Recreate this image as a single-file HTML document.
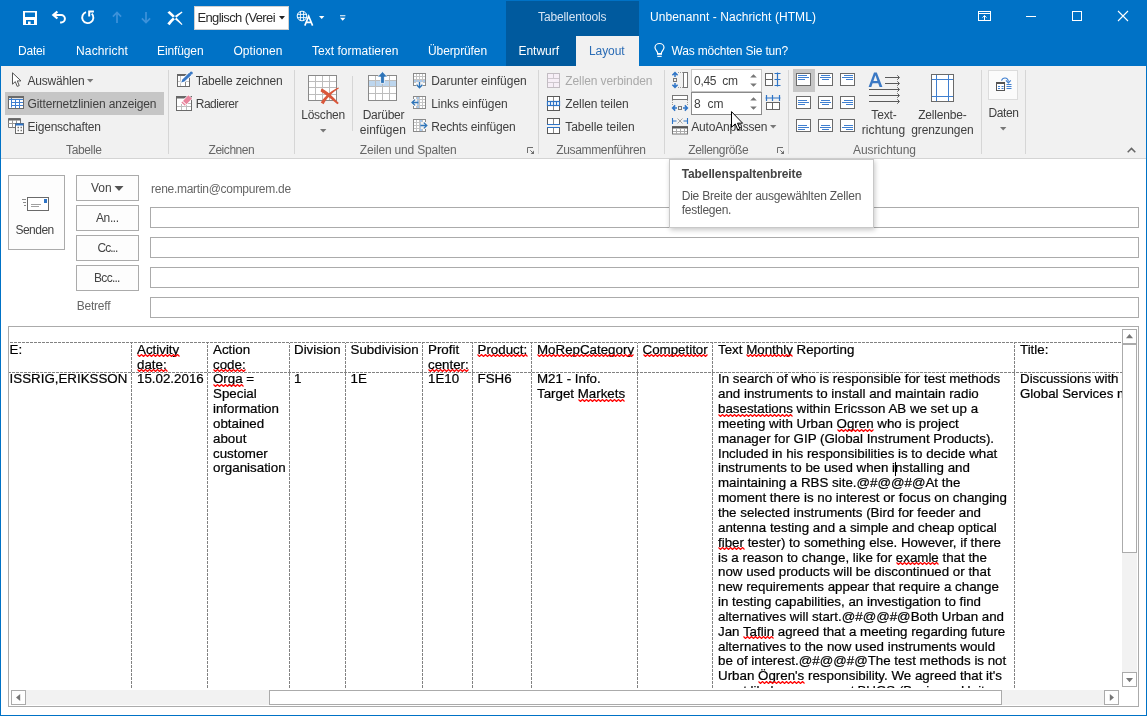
<!DOCTYPE html>
<html>
<head>
<meta charset="utf-8">
<title>Unbenannt - Nachricht (HTML)</title>
<style>
html,body{margin:0;padding:0;}
body{width:1147px;height:716px;overflow:hidden;background:#fff;font-family:"Liberation Sans",sans-serif;font-size:12px;color:#444;position:relative;}
.abs,.a{position:absolute;}
svg{position:absolute;overflow:visible;}
#win{position:absolute;left:0;top:0;width:1147px;height:716px;overflow:hidden;background:#fff;}
#blue{position:absolute;left:0;top:0;width:1147px;height:66px;background:#0072c6;}
#ctx{position:absolute;left:506px;top:1px;width:133px;height:65px;background:#005a9e;}
#tabsel{position:absolute;left:576px;top:36px;width:63px;height:30px;background:#f1f1f1;}
.t{position:absolute;white-space:pre;line-height:14px;opacity:0.999;}
#ribbon{position:absolute;left:1px;top:66px;width:1145px;height:92px;background:#f1f1f1;border-bottom:1px solid #d4d4d4;}
.sep{position:absolute;top:70px;width:1px;height:84px;background:#d6d6d6;}
.hl{position:absolute;background:#c6c6c6;}
.btn{position:absolute;border:1px solid #ababab;background:#fdfdfd;box-sizing:border-box;}
.fld{position:absolute;left:150px;width:989px;height:21px;border:1px solid #ababab;box-sizing:border-box;background:#fff;}
#lb,#rb,#bb{position:absolute;background:#0072c6;}
#lb{left:0;top:0;width:1px;height:716px;}
#rb{left:1146px;top:0;width:1px;height:716px;}
#bb{left:0;top:715px;width:1147px;height:1px;}
#ed{position:absolute;left:8px;top:326px;width:1131px;height:381px;border:1px solid #ababab;box-sizing:border-box;background:#fff;overflow:hidden;}
#doc{position:absolute;left:0;top:0;width:1113px;height:361px;overflow:hidden;font-size:13.333px;line-height:14.84px;color:#000;}
.c{position:absolute;white-space:nowrap;filter:grayscale(1);-webkit-text-stroke:0.22px #000;}
.vd{position:absolute;top:16px;width:1px;height:345px;background:repeating-linear-gradient(to bottom,#828282 0,#828282 1px,transparent 1px,transparent 2px,#828282 2px,#828282 4px);}
.hd{position:absolute;left:0;width:1113px;height:1px;background:repeating-linear-gradient(to right,transparent 0,transparent 1px,#828282 1px,#828282 4px);}
.sq{background-repeat:repeat-x;background-position:0 100%;}
.sbb{background:#fff;border:1px solid #ababab;box-sizing:border-box;}

</style>
</head>
<body>
<div id="win">
<div id="blue"></div>
<div id="ctx"></div>
<div id="tabsel"></div>
<div class="a" style="left:194px;top:6px;width:95px;height:24px;background:#fff;border:1px solid #d0d0d0;box-sizing:border-box;"></div>
<!-- QAT icons -->
<svg style="left:23px;top:11px" width="14" height="14"><path fill="#fff" fill-rule="evenodd" d="M0 0H14V14H0Z M2 1.5V6H12V1.5Z M3 9V13H5V10.6H7.6V13H11V9Z"/></svg>
<svg style="left:51px;top:10px" width="16" height="15" fill="none" stroke="#fff" stroke-width="2"><path d="M6.4 1.5L2.4 5L6.4 8.5" stroke-linejoin="miter" stroke-width="2.3"/><path d="M3 5H10.2A3.7 3.7 0 0 1 10.2 12.4H9.1"/></svg>
<svg style="left:80px;top:10px" width="16" height="15" fill="none" stroke="#fff" stroke-width="1.9"><path d="M6 2.2A5.6 5.6 0 1 0 11.8 3.6"/><path d="M13.9 1.6H9.2V6.6" stroke-linejoin="miter" stroke-width="2"/></svg>
<svg style="left:112px;top:11px" width="10" height="13" fill="none" stroke="#3d92da" stroke-width="1.7"><path d="M5 12V1.6M0.9 5.6L5 1.5L9.1 5.6"/></svg>
<svg style="left:141px;top:11px" width="10" height="13" fill="none" stroke="#3d92da" stroke-width="1.7"><path d="M5 1V11.4M0.9 7.4L5 11.5L9.1 7.4"/></svg>
<svg style="left:167px;top:11px" width="16" height="14"><path fill="#fff" d="M0.4 1.6L2.6 0C6.4 3 11.2 8.4 15.5 13.3L14.7 14C10 10.2 4.4 5.2 0.4 1.6Z M0.3 12.4L2.6 14.2C5.6 10 10.6 5.2 15.5 1.5L14.8 0.5C9.4 3.4 3.9 7.9 0.3 12.4Z"/></svg>
<svg style="left:279px;top:16px" width="6" height="4"><path d="M0 0H6L3 3.5Z" fill="#222"/></svg>
<!-- language icon -->
<svg style="left:296px;top:10px" width="19" height="17" fill="none" stroke="#fff"><circle cx="6" cy="6" r="4.8" stroke-width="1"/><path d="M1.2 4.4H10.8M1.2 7.6H10.8M4.4 1.3V10.7M7.6 1.3V10.7" stroke-width="0.9"/><path d="M8.8 15.6L12.7 6.2L16.6 15.6M10.2 12.4H15.2" stroke-width="1.6" stroke-linejoin="miter"/></svg>
<svg style="left:319px;top:16px" width="6" height="4"><path d="M0 0H5.4L2.7 3Z" fill="#fff"/></svg>
<svg style="left:340px;top:15px" width="6" height="7"><path d="M0 0.2H5.4V1.2H0Z M0 2.7H5.4L2.7 5.7Z" fill="#fff"/></svg>
<!-- lightbulb -->
<svg style="left:654px;top:43px" width="11" height="15" fill="none"><path d="M3.6 10C3.6 8 1 6.9 1 4.5A4.5 4 0 0 1 10 4.5C10 6.9 7.4 8 7.4 10" stroke="#fff" stroke-width="1.2"/><rect x="3" y="10" width="5" height="1.8" fill="#fff"/><rect x="3.3" y="12.8" width="4.4" height="1.1" fill="#fff"/></svg>
<!-- window controls -->
<svg style="left:978px;top:11px" width="13" height="10" fill="none" stroke="#fff" stroke-width="1"><rect x="0.5" y="0.5" width="12" height="9"/><path d="M0.5 2.5H12.5"/><path d="M6.5 9V4.6M4.5 6.6L6.5 4.6L8.5 6.6"/></svg>
<svg style="left:1026px;top:16px" width="10" height="1"><rect width="10" height="1" fill="#fff"/></svg>
<svg style="left:1072px;top:11px" width="10" height="10" fill="none" stroke="#fff" stroke-width="1"><rect x="0.5" y="0.5" width="9" height="9"/></svg>
<svg style="left:1118px;top:11px" width="10" height="10" fill="none" stroke="#fff" stroke-width="1.1"><path d="M0 0L10 10M10 0L0 10"/></svg>

<div id="ribbon"></div>
<div class="sep" style="left:168px"></div>
<div class="sep" style="left:294px"></div>
<div class="sep" style="left:352px;top:76px;height:55px"></div>
<div class="sep" style="left:538px"></div>
<div class="sep" style="left:664px"></div>
<div class="sep" style="left:788px"></div>
<div class="sep" style="left:981px"></div>
<div class="sep" style="left:1025px"></div>
<div class="hl" style="left:5px;top:92px;width:159px;height:23px"></div>
<div class="hl" style="left:793px;top:69px;width:22px;height:23px"></div>
<!-- === Tabelle group icons === -->
<svg style="left:11px;top:72px" width="11" height="16"><path d="M1.5 0.8V12.2L4.3 9.6L6.2 14.4L8.2 13.6L6.3 8.9L10 8.9Z" fill="#fff" stroke="#555" stroke-width="1" stroke-linejoin="miter"/></svg>
<svg style="left:8px;top:96px" width="16" height="13"><rect x="0.5" y="0.5" width="15" height="12" fill="#fff" stroke="#6a6a6a"/><path d="M3.5 1.5V11.5M1 3.5H15M4 6.5H15M4 9.5H15M7.5 3V12M11.5 3V12" stroke="#3f7fd0" stroke-width="1" fill="none"/><path d="M1 1.5H15" stroke="#6a6a6a" stroke-width="1.4"/></svg>
<svg style="left:8px;top:118px" width="16" height="16"><path d="M0.5 0.5H12.5V9.5H0.5Z" fill="#fff" stroke="#777"/><path d="M0.5 1.5H12.5" stroke="#666" stroke-width="2"/><path d="M0.5 5.5H8M4.5 2V9.5M8.5 2V5" stroke="#999" fill="none"/><rect x="7.5" y="5.5" width="8" height="10" fill="#fff" stroke="#6a6a6a"/><path d="M7.5 6.5H15.5" stroke="#2e74c6" stroke-width="2"/><path d="M9.5 9.5H11M12.5 9.5H14M9.5 12.5H11M12.5 12.5H14" stroke="#777" stroke-width="1.6"/></svg>
<svg style="left:87px;top:79px" width="7" height="4"><path d="M0 0H6.4L3.2 3.4Z" fill="#777"/></svg>
<!-- === Zeichnen group icons === -->
<svg style="left:177px;top:71px" width="16" height="16"><rect x="0.5" y="3.5" width="12" height="12" fill="#fff" stroke="#6a6a6a"/><path d="M0 4H13" stroke="#666" stroke-width="2"/><path d="M3.5 5V15M1 10.5H12" stroke="#c4c4c4" fill="none"/><path d="M8.5 11V15" stroke="#8a8a8a"/><path d="M4.2 11.4L5.4 8.2L12.4 1.6L14.6 3.8L7.6 10.4Z" fill="#fff" stroke="#fff" stroke-width="1.6"/><path d="M4.2 11.4L5.4 8.4L12.2 1.8L14.4 4L7.4 10.4Z" fill="#3a78c4"/><circle cx="14.2" cy="2" r="1.6" fill="#3a78c4"/></svg>
<svg style="left:176px;top:95px" width="17" height="17"><rect x="0.5" y="1.5" width="15" height="14" fill="#fff" stroke="#6a6a6a"/><path d="M0 2.5H16" stroke="#666" stroke-width="2"/><path d="M1 11.5H15M5.5 9V15M10.5 9V15M10 8.5H15" stroke="#bdbdbd" fill="none"/><path d="M4.6 7.4L12.3 -0.6L16.8 3.6L9 11.6Z" fill="#fff"/><path d="M7 5.9L12.3 0.2L16 3.6L10.5 9.2Z" fill="#e8849c"/><path d="M5.4 7.4L6.3 6.5L9.8 9.8L8.9 10.8Z" fill="#e8849c"/></svg>
<!-- === Zeilen und Spalten === -->
<!-- Löschen: table 308..337 x 75..101 -->
<svg style="left:308px;top:75px" width="32" height="30"><rect x="0.5" y="0.5" width="28" height="25" fill="#fff" stroke="#8a8a8a"/><path d="M7.5 1V25M14.5 1V25M21.5 1V25M1 6.5H28M1 12.5H28M1 19.5H28" stroke="#bdbdbd" fill="none"/><path d="M13.4 13.4C18 14.6 25 21.6 30.8 28L29.4 29.2C24 24.4 17.6 19.4 12.6 16.4Z M31 13.2C25.4 16.6 19.2 22.4 15.6 29.2L12.8 27.6C16.8 21 24.4 15 30.4 12.6Z" fill="#d9573b"/></svg>
<svg style="left:320px;top:129px" width="7" height="4"><path d="M0 0H6.4L3.2 3.4Z" fill="#777"/></svg>
<!-- Darüber: table 368..397 -->
<svg style="left:368px;top:71px" width="30" height="31"><rect x="0.5" y="4.5" width="28" height="25" fill="#fff" stroke="#8a8a8a"/><rect x="1" y="10" width="27" height="5" fill="#bdd6ee"/><path d="M7.5 5V29M14.5 5V29M21.5 5V29M1 9.5H28M1 15.5H28M1 22.5H28" stroke="#bdbdbd" fill="none"/><path d="M10 4H19V15H10Z" fill="#f1f1f1" opacity="0"/><path d="M14.5 0.6L19.6 6H16.4V12.4H12.6V6H9.4Z" fill="#2e74b8" stroke="#fff" stroke-width="0.8"/></svg>
<!-- Darunter einfügen small -->
<svg style="left:413px;top:73px" width="13" height="16"><rect x="0.5" y="0.5" width="12" height="12" fill="#fff" stroke="#8a8a8a"/><rect x="1" y="7" width="11" height="3" fill="#a9c8ea"/><path d="M3.5 1V12M6.5 1V12M9.5 1V12M1 3.5H12M1 6.5H12M1 9.5H12" stroke="#c4c4c4" fill="none"/><rect x="3" y="9" width="7" height="5" fill="#f1f1f1"/><path d="M6.5 9V14.6M3.6 11.8L6.5 14.8L9.4 11.8" stroke="#2e74b8" stroke-width="1.3" fill="none"/></svg>
<!-- Links einfügen small -->
<svg style="left:411px;top:96px" width="16" height="13"><rect x="2.5" y="0.5" width="12" height="12" fill="#fff" stroke="#8a8a8a"/><rect x="6" y="1" width="3" height="11" fill="#a9c8ea"/><path d="M5.5 1V12M8.5 1V12M11.5 1V12M3 3.5H14M3 6.5H14M3 9.5H14" stroke="#c4c4c4" fill="none"/><rect x="0" y="3" width="6" height="7" fill="#f1f1f1"/><path d="M7.4 6.5H1.2M4 3.6L1 6.5L4 9.4" stroke="#2e74b8" stroke-width="1.3" fill="none"/></svg>
<!-- Rechts einfügen small -->
<svg style="left:413px;top:119px" width="16" height="13"><rect x="0.5" y="0.5" width="12" height="12" fill="#fff" stroke="#8a8a8a"/><rect x="6" y="1" width="3" height="11" fill="#a9c8ea"/><path d="M3.5 1V12M6.5 1V12M9.5 1V12M1 3.5H12M1 6.5H12M1 9.5H12" stroke="#c4c4c4" fill="none"/><rect x="8" y="3" width="6" height="7" fill="#f1f1f1"/><path d="M7.4 6.5H13.6M10.8 3.6L13.8 6.5L10.8 9.4" stroke="#2e74b8" stroke-width="1.3" fill="none"/></svg>
<!-- dialog launcher -->
<svg style="left:527px;top:147px" width="8" height="8" fill="none"><path d="M0.5 6V0.5H6" stroke="#6e6e6e"/><path d="M3.3 3.3L6 6" stroke="#6e6e6e"/><path d="M7 3.6V7H3.6Z" fill="#6e6e6e"/></svg>
<!-- === Zusammenführen === -->
<svg style="left:547px;top:73px" width="13" height="15"><rect x="0.5" y="0.5" width="12" height="14" fill="#f7eff7" stroke="#c2bcc2"/><path d="M1 5.5H12M1 9.5H12M6.5 1V5M6.5 10V14" stroke="#cfc8cf" fill="none"/></svg>
<svg style="left:547px;top:96px" width="13" height="15"><rect x="0.5" y="0.5" width="12" height="14" fill="#fff" stroke="#5a5a5a"/><path d="M6.5 1V14" stroke="#8a8a8a"/><rect x="0.5" y="5.5" width="12" height="4" fill="#fff" stroke="#2e74c6" stroke-width="1.2"/><path d="M3.5 6V9M6.5 6V9M9.5 6V9" stroke="#2e74c6" stroke-width="1.2"/></svg>
<svg style="left:547px;top:118px" width="13" height="16"><rect x="0.5" y="0.5" width="12" height="15" fill="#fff" stroke="#5a5a5a"/><rect x="0" y="6" width="13" height="4" fill="#f1f1f1"/><path d="M6.5 1V6M6.5 10V15" stroke="#8a8a8a"/><path d="M0 6.5H13M0 9.5H13" stroke="#2e74c6" stroke-width="1.2"/></svg>
<!-- === Zellengröße === -->
<div class="a" style="left:691px;top:69px;width:71px;height:23px;background:#fff;border:1px solid #c6c6c6;box-sizing:border-box"></div>
<div class="a" style="left:691px;top:92px;width:71px;height:23px;background:#fff;border:1px solid #8a8a8a;box-sizing:border-box"></div>
<svg style="left:750px;top:74px" width="7" height="13"><path d="M0.2 3.4L3.5 0.2L6.8 3.4Z M0.2 9.6L3.5 12.8L6.8 9.6Z" fill="#777"/></svg>
<svg style="left:750px;top:97px" width="7" height="13"><path d="M0.2 3.4L3.5 0.2L6.8 3.4Z M0.2 9.6L3.5 12.8L6.8 9.6Z" fill="#777"/></svg>
<!-- row height icon 672..688 x 72..88 -->
<svg style="left:672px;top:72px" width="16" height="16" fill="none"><rect x="11.5" y="0.5" width="4" height="15" fill="#fff" stroke="#777"/><path d="M6 0.5H11M6 15.5H11" stroke="#999" stroke-dasharray="1 1"/><rect x="1.5" y="6.5" width="3" height="3" stroke="#777"/><path d="M3 5V1M0.4 3.2L3 0.6L5.6 3.2M3 11V15M0.4 12.8L3 15.4L5.6 12.8" stroke="#2e74c6" stroke-width="1.5"/></svg>
<!-- col width icon 672..688 x 95..111 -->
<svg style="left:672px;top:95px" width="16" height="16" fill="none"><rect x="0.5" y="0.5" width="15" height="4" fill="#fff" stroke="#777"/><path d="M0.5 5V10M15.5 5V10" stroke="#999" stroke-dasharray="1 1"/><rect x="6.5" y="11.5" width="3" height="3" stroke="#777"/><path d="M5 13H1M3.2 10.4L0.6 13L3.2 15.6M11 13H15M12.8 10.4L15.4 13L12.8 15.6" stroke="#2e74c6" stroke-width="1.5"/></svg>
<!-- autofit icon 672..688 x 118..134 -->
<svg style="left:672px;top:118px" width="16" height="16" fill="none"><path d="M0.5 0V6M15.5 0V6M0.5 3H4.5M11.5 3H15.5" stroke="#2e74c6" stroke-width="1.1"/><path d="M5.5 0.5L10.5 5.5M10.5 0.5L5.5 5.5" stroke="#999" stroke-width="0.9"/><rect x="0.5" y="8.5" width="15" height="7.5" fill="#fff" stroke="#777"/><path d="M0 9.5H16" stroke="#555" stroke-width="2"/><path d="M4.5 11V16M8.5 11V16M12.5 11V16M1 13.5H15" stroke="#aaa"/></svg>
<svg style="left:770px;top:125px" width="7" height="4"><path d="M0 0H6.4L3.2 3.4Z" fill="#777"/></svg>
<!-- distribute rows 765..781 x 73..87 -->
<svg style="left:765px;top:72px" width="16" height="15" fill="none"><rect x="0.5" y="1.5" width="7" height="12" fill="#fff" stroke="#666"/><path d="M1 7.5H8" stroke="#666"/><path d="M12.5 0.5V14.5M9.5 1.5H15.5M9.5 7.5H15.5M9.5 13.5H15.5" stroke="#2e74c6" stroke-width="1.2"/></svg>
<!-- distribute cols 765..781 x 95..110 -->
<svg style="left:765px;top:95px" width="16" height="15" fill="none"><path d="M0.5 3H15.5M1.5 0V6M7.5 0V6M14.5 0V6" stroke="#2e74c6" stroke-width="1.2"/><rect x="1.5" y="7.5" width="13" height="7" fill="#fff" stroke="#666"/><path d="M7.5 8V14.5" stroke="#666"/></svg>
<svg style="left:777px;top:147px" width="8" height="8" fill="none"><path d="M0.5 6V0.5H6" stroke="#6e6e6e"/><path d="M3.3 3.3L6 6" stroke="#6e6e6e"/><path d="M7 3.6V7H3.6Z" fill="#6e6e6e"/></svg>
<!-- === Ausrichtung === -->
<svg style="left:796px;top:73px" width="15" height="13"><rect x="0.5" y="0.5" width="14" height="12" fill="#fff" stroke="#6a6a6a"/><path d="M2 2.5H11M2 4.5H13M2 6.5H9" stroke="#3f7fd0"/></svg>
<svg style="left:818px;top:73px" width="15" height="13"><rect x="0.5" y="0.5" width="14" height="12" fill="#fff" stroke="#6a6a6a"/><path d="M3 2.5H12M2 4.5H13M4 6.5H11" stroke="#3f7fd0"/></svg>
<svg style="left:840px;top:73px" width="15" height="13"><rect x="0.5" y="0.5" width="14" height="12" fill="#fff" stroke="#6a6a6a"/><path d="M4 2.5H13M2 4.5H13M6 6.5H13" stroke="#3f7fd0"/></svg>
<svg style="left:796px;top:96px" width="15" height="13"><rect x="0.5" y="0.5" width="14" height="12" fill="#fff" stroke="#6a6a6a"/><path d="M2 4.5H11M2 6.5H13M2 8.5H9" stroke="#3f7fd0"/></svg>
<svg style="left:818px;top:96px" width="15" height="13"><rect x="0.5" y="0.5" width="14" height="12" fill="#fff" stroke="#6a6a6a"/><path d="M3 4.5H12M2 6.5H13M4 8.5H11" stroke="#3f7fd0"/></svg>
<svg style="left:840px;top:96px" width="15" height="13"><rect x="0.5" y="0.5" width="14" height="12" fill="#fff" stroke="#6a6a6a"/><path d="M4 4.5H13M2 6.5H13M6 8.5H13" stroke="#3f7fd0"/></svg>
<svg style="left:796px;top:119px" width="15" height="13"><rect x="0.5" y="0.5" width="14" height="12" fill="#fff" stroke="#6a6a6a"/><path d="M2 6.5H11M2 8.5H13M2 10.5H9" stroke="#3f7fd0"/></svg>
<svg style="left:818px;top:119px" width="15" height="13"><rect x="0.5" y="0.5" width="14" height="12" fill="#fff" stroke="#6a6a6a"/><path d="M3 6.5H12M2 8.5H13M4 10.5H11" stroke="#3f7fd0"/></svg>
<svg style="left:840px;top:119px" width="15" height="13"><rect x="0.5" y="0.5" width="14" height="12" fill="#fff" stroke="#6a6a6a"/><path d="M4 6.5H13M2 8.5H13M6 10.5H13" stroke="#3f7fd0"/></svg>
<svg style="left:868px;top:72px" width="33" height="32" fill="none"><path d="M0.6 15L6 0.6H8.8L14.4 15H11.6L10.2 11.2H4.6L3.3 15Z M5.4 9H9.4L7.4 3.2Z" fill="#3a78c4" fill-rule="evenodd"/><path d="M17 5.5H31M17 11.5H31M1 17.5H31M1 23.5H31M1 29.5H31" stroke="#5a5a5a" stroke-width="1"/><path d="M29.3 3.3L31.5 5.5L29.3 7.7M29.3 9.3L31.5 11.5L29.3 13.7M29.3 15.3L31.5 17.5L29.3 19.7M29.3 21.3L31.5 23.5L29.3 25.7M29.3 27.3L31.5 29.5L29.3 31.7" stroke="#5a5a5a" stroke-width="1"/></svg>
<svg style="left:931px;top:74px" width="23" height="28" fill="none"><rect x="0.5" y="0.5" width="22" height="27" fill="#fff" stroke="#6a6a6a"/><path d="M5.5 1V27M17.5 1V27M1 5.5H22M1 22.5H22" stroke="#3f7fd0"/></svg>
<div class="a" style="left:988px;top:70px;width:30px;height:30px;background:#fbfbfb;border:1px solid #dcdcdc;box-sizing:border-box"></div>
<svg style="left:996px;top:76px" width="16" height="16" fill="none"><rect x="0.5" y="6.5" width="8" height="8" fill="#fff" stroke="#555"/><path d="M0 7.2H9" stroke="#555" stroke-width="1.6"/><path d="M2 10.5H4M5.5 10.5H7.5M2 12.5H4M5.5 12.5H7.5" stroke="#3f7fd0"/><path d="M10.5 8.5H15.5M10.5 10.5H15.5M10.5 12.5H15.5" stroke="#3f7fd0"/><path d="M5.5 4.6C6.6 1.2 11.6 0.6 12.4 5.6" stroke="#3f7fd0" stroke-width="1.1"/><path d="M10 4.4L12.4 6.8L14.8 4.4" stroke="#3f7fd0" stroke-width="1.2"/></svg>
<svg style="left:1000px;top:127px" width="7" height="4"><path d="M0 0H6.4L3.2 3.4Z" fill="#777"/></svg>
<svg style="left:1127px;top:147px" width="9" height="6" fill="none"><path d="M0.7 5.2L4.5 1.4L8.3 5.2" stroke="#666" stroke-width="1.5"/></svg>

<div class="btn" style="left:8px;top:175px;width:57px;height:75px"></div>
<div class="btn" style="left:76px;top:175px;width:63px;height:26px"></div>
<div class="btn" style="left:76px;top:205px;width:63px;height:26px"></div>
<div class="btn" style="left:76px;top:235px;width:63px;height:26px"></div>
<div class="btn" style="left:76px;top:265px;width:63px;height:26px"></div>
<div class="fld" style="top:207px"></div>
<div class="fld" style="top:237px"></div>
<div class="fld" style="top:267px"></div>
<div class="fld" style="top:297px"></div>
<svg style="left:21px;top:196px" width="30" height="16" fill="none">
<rect x="6.5" y="1.5" width="21" height="13" fill="#fff" stroke="#6a6a6a" stroke-width="1"/>
<rect x="23" y="3" width="3" height="4" fill="#2e74c6"/>
<path d="M10 8.5H20M10 10.5H18" stroke="#a0a0a0"/>
<path d="M1 3.5H5M2 6.5H5M3 9.5H5" stroke="#8a8a8a"/>
</svg>
<svg style="left:114px;top:186px" width="10" height="5"><path d="M0.5 0L9.5 0L5 5Z" fill="#555"/></svg>

<div id="ed">
<div id="doc">
<!-- gridlines (doc coords = page - (9,327)) -->
<div class="hd" style="top:15px"></div>
<div class="hd" style="top:45px;background:repeating-linear-gradient(to right,#828282 0,#828282 2px,transparent 2px,transparent 3px,#828282 3px,#828282 4px)"></div>
<div class="vd" style="left:122px"></div>
<div class="vd" style="left:198px"></div>
<div class="vd" style="left:280px"></div>
<div class="vd" style="left:336px"></div>
<div class="vd" style="left:413px"></div>
<div class="vd" style="left:463px"></div>
<div class="vd" style="left:522px"></div>
<div class="vd" style="left:628px"></div>
<div class="vd" style="left:703px"></div>
<div class="vd" style="left:1005px"></div>
<!-- header row -->
<div class="c" style="left:0.6px;top:15.7px">E:</div>
<div class="c" style="left:128px;top:15.7px"><span class="sq">Activity</span><br><span class="sq">date:</span></div>
<div class="c" style="left:204px;top:15.7px">Action<br><span class="sq">code:</span></div>
<div class="c" style="left:285px;top:15.7px">Division</div>
<div class="c" style="left:341.5px;top:15.7px">Subdivision</div>
<div class="c" style="left:419px;top:15.7px">Profit<br><span class="sq">center:</span></div>
<div class="c" style="left:468.5px;top:15.7px"><span class="sq">Product:</span></div>
<div class="c" style="left:528px;top:15.7px"><span class="sq">MoRepCategory</span></div>
<div class="c" style="left:633.5px;top:15.7px"><span class="sq">Competitor</span></div>
<div class="c" style="left:709px;top:15.7px">Text <span class="sq">Monthly</span> Reporting</div>
<div class="c" style="left:1011px;top:15.7px">Title:</div>
<!-- data row -->
<div class="c" style="left:0.6px;top:45.4px">ISSRIG,ERIKSSON</div>
<div class="c" style="left:128px;top:45.4px">15.02.2016</div>
<div class="c" style="left:204px;top:45.4px"><span class="sq">Orga</span> =<br>Special<br>information<br>obtained<br>about<br>customer<br>organisation</div>
<div class="c" style="left:285px;top:45.4px">1</div>
<div class="c" style="left:341.5px;top:45.4px">1E</div>
<div class="c" style="left:419px;top:45.4px">1E10</div>
<div class="c" style="left:468.5px;top:45.4px">FSH6</div>
<div class="c" style="left:528px;top:45.4px">M21 - Info.<br>Target <span class="sq">Markets</span></div>
<div class="c" style="left:709px;top:45.4px">In search of who is responsible for test methods<br>and instruments to install and maintain radio<br><span class="sq">basestations</span> within Ericsson AB we set up a<br>meeting with Urban <span class="sq">Ogren</span> who is project<br>manager for GIP (Global Instrument Products).<br>Included in his responsibilities is to decide what<br>instruments to be used when i<span id="caretpos"></span>nstalling and<br>maintaining a RBS site.@#@@#@At the<br>moment there is no interest or focus on changing<br>the selected instruments (Bird for feeder and<br>antenna testing and a simple and cheap optical<br><span class="sq">fiber</span> tester) to something else. However, if there<br>is a reason to change, like for <span class="sq">examle</span> that the<br>now used products will be discontinued or that<br>new requirements appear that require a change<br>in testing capabilities, an investigation to find<br>alternatives will start.@#@@#@Both Urban and<br>Jan <span class="sq">Taflin</span> agreed that a meeting regarding future<br>alternatives to the now used instruments would<br>be of interest.@#@@#@The test methods is not<br>Urban <span class="sq">Ögren's</span> responsibility. We agreed that it's<br>most likely <span style="letter-spacing:-0.8px">management</span> BUGS (Business Unit</div>
<div class="c" style="left:1011px;top:45.4px">Discussions with<br>Global Services management</div>
<svg style="left:0;top:0" width="1113" height="363" fill="none" stroke="#ff0000" stroke-width="1.1" stroke-linejoin="round"><polyline points="128.5,27.5 130.5,29.5 132.5,27.5 134.5,29.5 136.5,27.5 138.5,29.5 140.5,27.5 142.5,29.5 144.5,27.5 146.5,29.5 148.5,27.5 150.5,29.5 152.5,27.5 154.5,29.5 156.5,27.5 158.5,29.5 160.5,27.5 162.5,29.5 164.5,27.5 166.5,29.5 168.5,27.5 170.5,29.5"/><polyline points="128.5,42.5 130.5,44.5 132.5,42.5 134.5,44.5 136.5,42.5 138.5,44.5 140.5,42.5 142.5,44.5 144.5,42.5 146.5,44.5 148.5,42.5 150.5,44.5 152.5,42.5 154.5,44.5 156.5,42.5 158.5,44.5"/><polyline points="204.5,42.5 206.5,44.5 208.5,42.5 210.5,44.5 212.5,42.5 214.5,44.5 216.5,42.5 218.5,44.5 220.5,42.5 222.5,44.5 224.5,42.5 226.5,44.5 228.5,42.5 230.5,44.5 232.5,42.5 234.5,44.5 236.5,42.5"/><polyline points="419.5,42.5 421.5,44.5 423.5,42.5 425.5,44.5 427.5,42.5 429.5,44.5 431.5,42.5 433.5,44.5 435.5,42.5 437.5,44.5 439.5,42.5 441.5,44.5 443.5,42.5 445.5,44.5 447.5,42.5 449.5,44.5 451.5,42.5 453.5,44.5 455.5,42.5 457.5,44.5 459.5,42.5"/><polyline points="468.5,27.5 470.5,29.5 472.5,27.5 474.5,29.5 476.5,27.5 478.5,29.5 480.5,27.5 482.5,29.5 484.5,27.5 486.5,29.5 488.5,27.5 490.5,29.5 492.5,27.5 494.5,29.5 496.5,27.5 498.5,29.5 500.5,27.5 502.5,29.5 504.5,27.5 506.5,29.5 508.5,27.5 510.5,29.5 512.5,27.5 514.5,29.5 516.5,27.5 518.5,29.5"/><polyline points="528.5,27.5 530.5,29.5 532.5,27.5 534.5,29.5 536.5,27.5 538.5,29.5 540.5,27.5 542.5,29.5 544.5,27.5 546.5,29.5 548.5,27.5 550.5,29.5 552.5,27.5 554.5,29.5 556.5,27.5 558.5,29.5 560.5,27.5 562.5,29.5 564.5,27.5 566.5,29.5 568.5,27.5 570.5,29.5 572.5,27.5 574.5,29.5 576.5,27.5 578.5,29.5 580.5,27.5 582.5,29.5 584.5,27.5 586.5,29.5 588.5,27.5 590.5,29.5 592.5,27.5 594.5,29.5 596.5,27.5 598.5,29.5 600.5,27.5 602.5,29.5 604.5,27.5 606.5,29.5 608.5,27.5 610.5,29.5 612.5,27.5 614.5,29.5 616.5,27.5 618.5,29.5 620.5,27.5 622.5,29.5 624.5,27.5"/><polyline points="634.5,27.5 636.5,29.5 638.5,27.5 640.5,29.5 642.5,27.5 644.5,29.5 646.5,27.5 648.5,29.5 650.5,27.5 652.5,29.5 654.5,27.5 656.5,29.5 658.5,27.5 660.5,29.5 662.5,27.5 664.5,29.5 666.5,27.5 668.5,29.5 670.5,27.5 672.5,29.5 674.5,27.5 676.5,29.5 678.5,27.5 680.5,29.5 682.5,27.5 684.5,29.5 686.5,27.5 688.5,29.5 690.5,27.5 692.5,29.5 694.5,27.5 696.5,29.5 698.5,27.5"/><polyline points="737.5,27.5 739.5,29.5 741.5,27.5 743.5,29.5 745.5,27.5 747.5,29.5 749.5,27.5 751.5,29.5 753.5,27.5 755.5,29.5 757.5,27.5 759.5,29.5 761.5,27.5 763.5,29.5 765.5,27.5 767.5,29.5 769.5,27.5 771.5,29.5 773.5,27.5 775.5,29.5 777.5,27.5 779.5,29.5 781.5,27.5 783.5,29.5"/><polyline points="204.5,57.5 206.5,59.5 208.5,57.5 210.5,59.5 212.5,57.5 214.5,59.5 216.5,57.5 218.5,59.5 220.5,57.5 222.5,59.5 224.5,57.5 226.5,59.5 228.5,57.5 230.5,59.5 232.5,57.5 234.5,59.5"/><polyline points="569.5,72.5 571.5,74.5 573.5,72.5 575.5,74.5 577.5,72.5 579.5,74.5 581.5,72.5 583.5,74.5 585.5,72.5 587.5,74.5 589.5,72.5 591.5,74.5 593.5,72.5 595.5,74.5 597.5,72.5 599.5,74.5 601.5,72.5 603.5,74.5 605.5,72.5 607.5,74.5 609.5,72.5 611.5,74.5 613.5,72.5 615.5,74.5"/><polyline points="709.5,87.5 711.5,89.5 713.5,87.5 715.5,89.5 717.5,87.5 719.5,89.5 721.5,87.5 723.5,89.5 725.5,87.5 727.5,89.5 729.5,87.5 731.5,89.5 733.5,87.5 735.5,89.5 737.5,87.5 739.5,89.5 741.5,87.5 743.5,89.5 745.5,87.5 747.5,89.5 749.5,87.5 751.5,89.5 753.5,87.5 755.5,89.5 757.5,87.5 759.5,89.5 761.5,87.5 763.5,89.5 765.5,87.5 767.5,89.5 769.5,87.5 771.5,89.5 773.5,87.5 775.5,89.5 777.5,87.5 779.5,89.5 781.5,87.5 783.5,89.5"/><polyline points="828.5,102.5 830.5,104.5 832.5,102.5 834.5,104.5 836.5,102.5 838.5,104.5 840.5,102.5 842.5,104.5 844.5,102.5 846.5,104.5 848.5,102.5 850.5,104.5 852.5,102.5 854.5,104.5 856.5,102.5 858.5,104.5 860.5,102.5 862.5,104.5 864.5,102.5"/><polyline points="709.5,220.5 711.5,222.5 713.5,220.5 715.5,222.5 717.5,220.5 719.5,222.5 721.5,220.5 723.5,222.5 725.5,220.5 727.5,222.5 729.5,220.5 731.5,222.5 733.5,220.5 735.5,222.5"/><polyline points="887.5,235.5 889.5,237.5 891.5,235.5 893.5,237.5 895.5,235.5 897.5,237.5 899.5,235.5 901.5,237.5 903.5,235.5 905.5,237.5 907.5,235.5 909.5,237.5 911.5,235.5 913.5,237.5 915.5,235.5 917.5,237.5 919.5,235.5 921.5,237.5 923.5,235.5 925.5,237.5 927.5,235.5 929.5,237.5"/><polyline points="734.5,309.5 736.5,311.5 738.5,309.5 740.5,311.5 742.5,309.5 744.5,311.5 746.5,309.5 748.5,311.5 750.5,309.5 752.5,311.5 754.5,309.5 756.5,311.5 758.5,309.5 760.5,311.5 762.5,309.5 764.5,311.5"/><polyline points="749.5,354.5 751.5,356.5 753.5,354.5 755.5,356.5 757.5,354.5 759.5,356.5 761.5,354.5 763.5,356.5 765.5,354.5 767.5,356.5 769.5,354.5 771.5,356.5 773.5,354.5 775.5,356.5 777.5,354.5 779.5,356.5 781.5,354.5 783.5,356.5 785.5,354.5 787.5,356.5 789.5,354.5 791.5,356.5 793.5,354.5 795.5,356.5"/></svg><div class="a" style="left:886px;top:134.5px;width:1px;height:14px;background:#000"></div>
</div>
<!-- vertical scrollbar -->
<div class="a" style="left:1113px;top:17px;width:15px;height:328px;background:#f2f2f2"></div>
<div class="a sbb" style="left:1113px;top:2px;width:15px;height:15px"></div>
<div class="a sbb" style="left:1113px;top:17px;width:15px;height:209px"></div>
<div class="a sbb" style="left:1113px;top:345px;width:15px;height:15px"></div>
<svg style="left:1113px;top:2px" width="15" height="15"><path d="M4 9.2L7.5 5L11 9.2Z" fill="#777"/></svg>
<svg style="left:1113px;top:345px" width="15" height="15"><path d="M4 6L7.5 10.2L11 6Z" fill="#777"/></svg>
<!-- horizontal scrollbar -->
<div class="a" style="left:17px;top:363px;width:1078px;height:15px;background:#f2f2f2"></div>
<div class="a sbb" style="left:2px;top:363px;width:15px;height:15px"></div>
<div class="a sbb" style="left:260px;top:363px;width:733px;height:15px"></div>
<div class="a sbb" style="left:1095px;top:363px;width:15px;height:15px"></div>
<svg style="left:2px;top:363px" width="15" height="15"><path d="M9.2 4L5 7.5L9.2 11Z" fill="#777"/></svg>
<svg style="left:1095px;top:363px" width="15" height="15"><path d="M5.8 4L10 7.5L5.8 11Z" fill="#777"/></svg>
</div>

<!-- UI TEXT -->
<div class="t" style="left:538px;top:9.74px;font-size:12px;color:#d3e3f3;letter-spacing:-0.120px;">Tabellentools</div>
<div class="t" style="left:650px;top:9.74px;font-size:12px;color:#fff;letter-spacing:0.069px;">Unbenannt - Nachricht (HTML)</div>
<div class="t" style="left:197.4px;top:10.60px;font-size:13px;color:#2a2a2a;letter-spacing:-0.608px;">Englisch (Verei</div>
<div class="t" style="left:18px;top:44.04px;font-size:12px;color:#fff;letter-spacing:-0.203px;">Datei</div>
<div class="t" style="left:76px;top:44.04px;font-size:12px;color:#fff;letter-spacing:0.146px;">Nachricht</div>
<div class="t" style="left:157px;top:44.04px;font-size:12px;color:#fff;letter-spacing:-0.109px;">Einfügen</div>
<div class="t" style="left:233.5px;top:44.04px;font-size:12px;color:#fff;letter-spacing:0.037px;">Optionen</div>
<div class="t" style="left:312px;top:44.04px;font-size:12px;color:#fff;letter-spacing:0.028px;">Text formatieren</div>
<div class="t" style="left:428px;top:44.04px;font-size:12px;color:#fff;letter-spacing:-0.105px;">Überprüfen</div>
<div class="t" style="left:518.5px;top:44.04px;font-size:12px;color:#fff;letter-spacing:-0.027px;">Entwurf</div>
<div class="t" style="left:589px;top:44.04px;font-size:12px;color:#2b6cb5;letter-spacing:-0.089px;">Layout</div>
<div class="t" style="left:671.5px;top:44.04px;font-size:12px;color:#fff;letter-spacing:-0.189px;">Was möchten Sie tun?</div>
<div class="t" style="left:27.5px;top:73.74px;font-size:12px;color:#404040;letter-spacing:-0.191px;">Auswählen</div>
<div class="t" style="left:27.5px;top:96.74px;font-size:12px;color:#404040;letter-spacing:-0.128px;">Gitternetzlinien anzeigen</div>
<div class="t" style="left:27.5px;top:119.74px;font-size:12px;color:#404040;letter-spacing:-0.220px;">Eigenschaften</div>
<div class="t" style="left:195.7px;top:73.74px;font-size:12px;color:#404040;letter-spacing:-0.163px;">Tabelle zeichnen</div>
<div class="t" style="left:195.7px;top:96.74px;font-size:12px;color:#404040;letter-spacing:-0.466px;">Radierer</div>
<div class="t" style="left:301.2px;top:107.74px;font-size:12px;color:#404040;letter-spacing:-0.225px;">Löschen</div>
<div class="t" style="left:362.7px;top:107.74px;font-size:12px;color:#404040;letter-spacing:-0.251px;">Darüber</div>
<div class="t" style="left:359.8px;top:123.14px;font-size:12px;color:#404040;letter-spacing:0.007px;">einfügen</div>
<div class="t" style="left:431.2px;top:73.74px;font-size:12px;color:#404040;letter-spacing:-0.034px;">Darunter einfügen</div>
<div class="t" style="left:431.2px;top:96.74px;font-size:12px;color:#404040;letter-spacing:-0.071px;">Links einfügen</div>
<div class="t" style="left:431.2px;top:119.74px;font-size:12px;color:#404040;letter-spacing:-0.162px;">Rechts einfügen</div>
<div class="t" style="left:565.3px;top:73.74px;font-size:12px;color:#a9a9a9;letter-spacing:-0.102px;">Zellen verbinden</div>
<div class="t" style="left:565.3px;top:96.74px;font-size:12px;color:#404040;letter-spacing:-0.109px;">Zellen teilen</div>
<div class="t" style="left:565.3px;top:119.74px;font-size:12px;color:#404040;letter-spacing:-0.054px;">Tabelle teilen</div>
<div class="t" style="left:694px;top:73.74px;font-size:12px;color:#404040;letter-spacing:-0.291px;">0,45  cm</div>
<div class="t" style="left:694px;top:96.74px;font-size:12px;color:#404040;letter-spacing:0.051px;">8  cm</div>
<div class="t" style="left:691.2px;top:119.74px;font-size:12px;color:#404040;letter-spacing:-0.155px;">AutoAnpassen</div>
<div class="t" style="left:871.3px;top:107.74px;font-size:12px;color:#404040;letter-spacing:-0.163px;">Text-</div>
<div class="t" style="left:861.7px;top:123.14px;font-size:12px;color:#404040;letter-spacing:0.112px;">richtung</div>
<div class="t" style="left:918.2px;top:107.74px;font-size:12px;color:#404040;letter-spacing:-0.181px;">Zellenbe-</div>
<div class="t" style="left:911.2px;top:123.14px;font-size:12px;color:#404040;letter-spacing:-0.099px;">grenzungen</div>
<div class="t" style="left:988.6px;top:105.54px;font-size:12px;color:#404040;letter-spacing:-0.426px;">Daten</div>
<div class="t" style="left:66px;top:142.94px;font-size:12px;color:#666;letter-spacing:-0.362px;">Tabelle</div>
<div class="t" style="left:208.5px;top:142.94px;font-size:12px;color:#666;letter-spacing:-0.447px;">Zeichnen</div>
<div class="t" style="left:359.8px;top:142.94px;font-size:12px;color:#666;letter-spacing:-0.182px;">Zeilen und Spalten</div>
<div class="t" style="left:556.2px;top:142.94px;font-size:12px;color:#666;letter-spacing:-0.332px;">Zusammenführen</div>
<div class="t" style="left:688.3px;top:142.94px;font-size:12px;color:#666;letter-spacing:-0.357px;">Zellengröße</div>
<div class="t" style="left:853px;top:142.94px;font-size:12px;color:#666;letter-spacing:-0.034px;">Ausrichtung</div>
<div class="t" style="left:15.4px;top:223.24px;font-size:12px;color:#444;letter-spacing:-0.496px;">Senden</div>
<div class="t" style="left:91px;top:181.04px;font-size:12px;color:#444;letter-spacing:-0.001px;">Von</div>
<div class="t" style="left:96px;top:211.04px;font-size:12px;color:#444;letter-spacing:-0.397px;">An...</div>
<div class="t" style="left:97.5px;top:241.14px;font-size:12px;color:#444;letter-spacing:-0.974px;">Cc...</div>
<div class="t" style="left:94.1px;top:271.14px;font-size:12px;color:#444;letter-spacing:-0.736px;">Bcc...</div>
<div class="t" style="left:76.8px;top:298.84px;font-size:12px;color:#666;letter-spacing:-0.234px;">Betreff</div>
<div class="t" style="left:151.1px;top:181.54px;font-size:12px;color:#666;letter-spacing:-0.285px;">rene.martin@compurem.de</div>
<div class="t" style="left:681.7px;top:167.24px;font-size:12px;color:#444;font-weight:bold;letter-spacing:-0.104px;z-index:6;">Tabellenspaltenbreite</div>
<div class="t" style="left:681.7px;top:188.64px;font-size:12px;color:#555;letter-spacing:-0.217px;z-index:6;">Die Breite der ausgewählten Zellen</div>
<div class="t" style="left:681.7px;top:203.34px;font-size:12px;color:#555;letter-spacing:-0.255px;z-index:6;">festlegen.</div>
<div class="a" style="left:669px;top:159px;width:205px;height:69px;background:#fff;border:1px solid #c8c8c8;box-sizing:border-box;box-shadow:1px 2px 5px rgba(0,0,0,0.22);z-index:5"></div>
<svg style="left:731px;top:111px;z-index:7" width="13" height="21"><path d="M0.5 0.6V16.3L4.2 12.9L6.8 18.8L9 17.9L6.5 12.2H11.6Z" fill="#fff" stroke="#000" stroke-width="1" stroke-linejoin="miter"/></svg>
<div id="lb"></div><div id="rb"></div><div id="bb"></div>

</div>
</body>
</html>
